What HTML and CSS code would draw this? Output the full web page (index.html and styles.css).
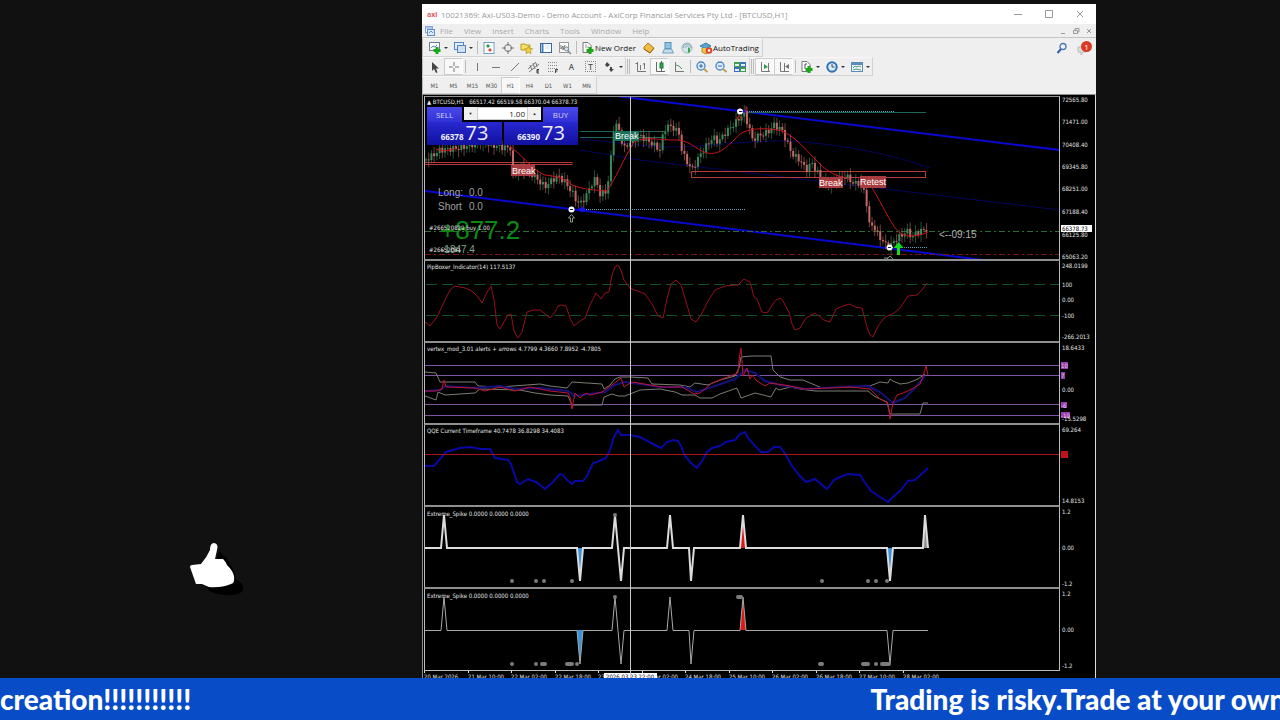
FILE: index.html
```html
<!DOCTYPE html>
<html lang="en">
<head>
    <meta charset="UTF-8">
    <meta name="viewport" content="width=device-width, initial-scale=1.0">
    <title>BTCUSD,H1 - Live Stream</title>
    <link rel="stylesheet" href="styles.css">
</head>
<body>
    <div class="stage">
        <aside class="sidebar">
            <svg class="thumb" width="56" height="56" viewBox="0 0 56 56">
                <path class="thumb-shadow" d="M30 10 L38 18 Q46 30 47 39 Q56 42 54 50 Q48 55 38 54 Q22 54 18 47 Z"/>
                <path class="thumb-hand" d="M1 26 Q1 24 3 24 L12 23 Q18 16 21 9 Q21 2 25 2 Q30 3 28 9 L26 18 L34 18 Q37 21 38 24 Q44 30 45 35 Q46 42 42 43 Q32 47 20 46 L13 43 L7 43 Z"/>
            </svg>
        </aside>

        <main class="terminal">
            <header class="titlebar">
                <span class="logo">axi</span>
                <h1>10021369: Axi-US03-Demo - Demo Account - AxiCorp Financial Services Pty Ltd - [BTCUSD,H1]</h1>
                <div class="window-btns">
                    <button aria-label="Minimize"><svg width="10" height="10"><path d="M1 5.500h8"/></svg></button>
                    <button aria-label="Maximize"><svg width="10" height="10"><path d="M1.500 1.500h7v7h-7z"/></svg></button>
                    <button aria-label="Close"><svg width="10" height="10"><path d="M2 2l6 6M8 2l-6 6"/></svg></button>
                </div>
            </header>

            <nav class="menubar">
                <svg class="menu-icon" width="12" height="12"><rect x="1.500" y="1.500" width="7" height="6" fill="#fff" stroke="#7fa8d8"/><rect x="3.500" y="4.500" width="7" height="6" fill="#dbe9f8" stroke="#5f8fc8"/><path d="M2 3h6M5 8l2-2 2 2" stroke="#5f8fc8" fill="none"/></svg>
                <a href="#">File</a>
                <a href="#">View</a>
                <a href="#">Insert</a>
                <a href="#">Charts</a>
                <a href="#">Tools</a>
                <a href="#">Window</a>
                <a href="#">Help</a>
                <div class="child-btns">
                    <button aria-label="Minimize chart"><svg width="8" height="8"><path d="M2 6.500h4"/></svg></button>
                    <button aria-label="Restore chart"><svg width="8" height="8"><path d="M1.500 3.500h4v3h-4zM3 3V1.500h4V5H6"/></svg></button>
                    <button aria-label="Close chart"><svg width="8" height="8"><path d="M2 2l4 4M6 2l-4 4"/></svg></button>
                </div>
            </nav>

            <div class="toolbar">
                <div class="tools">
                    <button class="tool drop" aria-label="New chart"><svg width="14" height="14"><rect x="1.500" y="1.500" width="10" height="8" fill="#fff" stroke="#6b7f93"/><path d="M3 7l2-2 2 1 2-2" stroke="#4a90c0" fill="none"/><path d="M9 6v7M5.500 9.500h7" stroke="#18a818" stroke-width="3"/></svg></button>
                    <button class="tool drop" aria-label="Profiles"><svg width="14" height="14"><rect x="1.500" y="1.500" width="9" height="7" fill="#e3eefa" stroke="#5585ba"/><rect x="4.500" y="4.500" width="8" height="7" fill="#cfe0f2" stroke="#5585ba"/></svg></button>
                    <i class="sep"></i>
                    <button class="tool" aria-label="Market watch"><svg width="14" height="14"><rect x="2" y="1.500" width="10" height="11" fill="#fff" stroke="#6f9fc4"/><path d="M4 5l2-2 2 2-2 2z" fill="#23a047"/><path d="M6 9l2-2 2 2-2 2z" fill="#d9512f"/></svg></button>
                    <button class="tool" aria-label="Data window"><svg width="14" height="14"><circle cx="7" cy="7" r="3.500" fill="none" stroke="#777"/><path d="M7 1v4M7 9v4M1 7h4M9 7h4" stroke="#777"/></svg></button>
                    <button class="tool" aria-label="Navigator"><svg width="14" height="14"><path d="M1 3h4l1 1h4v5H1z" fill="#f6e06a" stroke="#b79d22"/><path d="M8.500 5l1.200 2.500 2.800.3-2 2 .5 2.800-2.500-1.300L6 12.600l.5-2.800-2-2 2.800-.3z" fill="#f3d23c" stroke="#b08d18" stroke-width=".7"/></svg></button>
                    <button class="tool" aria-label="Terminal"><svg width="14" height="14"><rect x="1.500" y="2.500" width="11" height="9" fill="#fff" stroke="#34679c"/><path d="M3.500 3v8" stroke="#4a7fc0" stroke-width="2"/><path d="M6 5h5M6 7h5" stroke="#cde"/></svg></button>
                    <button class="tool" aria-label="Strategy tester"><svg width="14" height="14"><rect x="1.500" y="1.500" width="9" height="10" fill="#fff" stroke="#999"/><path d="M3 4v4l2-3v4l2-5" stroke="#777" fill="none"/><circle cx="8.500" cy="8" r="2" fill="#dceaf0" stroke="#6a8a9a"/><path d="M10 10l3 3" stroke="#888" stroke-width="1.500"/></svg></button>
                    <i class="sep"></i>
                    <button class="tool text-tool order"><svg width="14" height="14"><path d="M2 1.500h5l3 3v7H2z" fill="#fff" stroke="#777"/><path d="M4 4h2M4 6h4" stroke="#999"/><path d="M9 6v7M5.500 9.500h7" stroke="#18a818" stroke-width="3"/></svg>New Order</button>
                    <button class="tool" aria-label="MetaEditor"><svg width="14" height="14"><path d="M2 6l4-4 6 5-4 5-6-4z" fill="#eebd45" stroke="#b5791a"/><path d="M2 8l6 4 4-5" fill="none" stroke="#9c640e"/></svg></button>
                    <button class="tool" aria-label="Community"><svg width="14" height="14"><rect x="4" y="1.500" width="6" height="6" fill="#8fc4e6" stroke="#5a90b8"/><path d="M1.500 12l2-4h7l2 4z" fill="#c5dff0" stroke="#6f9fbe"/></svg></button>
                    <button class="tool" aria-label="Signals"><svg width="14" height="14"><circle cx="7" cy="7" r="5" fill="#d6e6e8" stroke="#9bb5bb"/><path d="M3 7a4 4 0 018 0M5 7a2 2 0 014 0" fill="none" stroke="#8cb0bc"/><path d="M8 7v5l2-1V7z" fill="#3aa853"/></svg></button>
                    <button class="tool text-tool auto"><svg width="14" height="14"><path d="M1 5l6-3 5 3-5 3z" fill="#5ba4cf" stroke="#3c7ca4"/><path d="M3 7v4l4 2 3-2V7" fill="#efc64c" stroke="#b68f20"/><circle cx="10" cy="9.500" r="3.300" fill="#dc4428"/><path d="M8.800 8.300h2.400v2.400H8.800z" fill="#fff"/></svg>AutoTrading</button>
                </div>
                <div class="alerts">
                    <button aria-label="Search"><svg width="12" height="12"><circle cx="7" cy="4.500" r="3" fill="#eef4fc" stroke="#4872b0" stroke-width="1.300"/><path d="M5 7l-3.500 4" stroke="#3560a8" stroke-width="2"/></svg></button>
                    <button class="bubble" aria-label="Messages"><svg width="16" height="16"><path d="M2 7h8v5H7l-2 3v-3H2z" fill="#ddd" stroke="#bbb"/></svg><span class="badge">1</span></button>
                </div>
            </div>

            <div class="toolbar">
                <div class="tools">
                    <button class="tool" aria-label="Cursor"><svg width="14" height="14"><path d="M4 2v9l2-2 2 4 1.500-.7L8 8.500h3z" fill="#444"/></svg></button>
                    <button class="tool on" aria-label="Crosshair"><svg width="14" height="14"><path d="M7 2v4M7 8v4M2 7h4M8 7h4" stroke="#777"/></svg></button>
                    <i class="sep"></i>
                    <button class="tool" aria-label="Vertical line"><svg width="14" height="14"><path d="M7.500 3v8" stroke="#777"/></svg></button>
                    <button class="tool" aria-label="Horizontal line"><svg width="14" height="14"><path d="M3 7.500h8" stroke="#777"/></svg></button>
                    <button class="tool" aria-label="Trendline"><svg width="14" height="14"><path d="M3 11l8-8" stroke="#777"/></svg></button>
                    <button class="tool" aria-label="Equidistant channel"><svg width="14" height="14"><path d="M1 9l8-7M2 12l10-8M3 5l2 5M6 3l2 6M9 3l1 4" stroke="#777"/><path d="M12 9.500h-2v3.500h2M10 11h2" stroke="#333" fill="none"/></svg></button>
                    <button class="tool" aria-label="Fibonacci"><svg width="14" height="14"><path d="M2 2.500h10M2 5.500h10M2 8.500h10M2 11.500h6" stroke="#888" stroke-dasharray="1 1"/><path d="M9.500 13V9.500H12M9.500 11h2" stroke="#444" fill="none"/></svg></button>
                    <button class="tool glyph" aria-label="Text">A</button>
                    <button class="tool glyph boxed" aria-label="Text label"><span>T</span></button>
                    <button class="tool drop" aria-label="Arrows"><svg width="14" height="14"><path d="M4 2l3 3-3 2-2-2zM8 12l-2-3h1V7h2v2h2z" fill="#444"/></svg></button>
                </div>
                <div class="tools">
                    <i class="grip"></i>
                    <button class="tool" aria-label="Bar chart"><svg width="14" height="14"><path d="M3.500 2v9.500H12M6.500 5v5M10.500 3v6M1.500 3.500h2" stroke="#777" fill="none"/><path d="M9 4h1.500" stroke="#2a9d48"/></svg></button>
                    <button class="tool on" aria-label="Candlesticks"><svg width="14" height="14"><path d="M3.500 2v9.500H12M8.500 1v10" stroke="#666" fill="none"/><rect x="7" y="3" width="3" height="5" fill="#2aa74a" stroke="#1c7a34"/></svg></button>
                    <button class="tool" aria-label="Line chart"><svg width="14" height="14"><path d="M3.500 2v9.500H12" stroke="#777" fill="none"/><path d="M4 5q3 0 6 4" stroke="#4c9c68" fill="none"/></svg></button>
                    <i class="sep"></i>
                    <button class="tool" aria-label="Zoom in"><svg width="14" height="14"><circle cx="6" cy="6" r="4" fill="#dcecfa" stroke="#4a86c4" stroke-width="1.300"/><path d="M4 6h4M6 4v4" stroke="#2c6aa8"/><path d="M9 9l3.500 3" stroke="#c0a050" stroke-width="2"/></svg></button>
                    <button class="tool" aria-label="Zoom out"><svg width="14" height="14"><circle cx="6" cy="6" r="4" fill="#dcecfa" stroke="#4a86c4" stroke-width="1.300"/><path d="M4 6h4" stroke="#2c6aa8"/><path d="M9 9l3.500 3" stroke="#c0a050" stroke-width="2"/></svg></button>
                    <button class="tool" aria-label="Tile windows"><svg width="14" height="14"><path d="M1 2h6v5H1z" fill="#3f9c4a"/><path d="M7 2h6v5H7z" fill="#3c6fc0"/><path d="M1 7h6v5H1z" fill="#3c6fc0"/><path d="M7 7h6v5H7z" fill="#3f9c4a"/><path d="M2 4h4v2H2zM8 4h4v2H8zM2 9h4v2H2zM8 9h4v2H8z" fill="#e6f1ee"/></svg></button>
                </div>
                <div class="tools">
                    <i class="grip"></i>
                    <button class="tool on" aria-label="Auto scroll"><svg width="14" height="14"><path d="M3.500 2v9.500H12M10.500 3v8" stroke="#777" fill="none"/><path d="M6 4l4 3-4 2z" fill="#2a9d48"/></svg></button>
                    <button class="tool on" aria-label="Chart shift"><svg width="14" height="14"><path d="M3.500 2v9.500H12M7.500 3v8" stroke="#777" fill="none"/><path d="M12 4L8 6.500 12 9z" fill="#777"/></svg></button>
                    <i class="sep"></i>
                    <button class="tool drop" aria-label="Indicators"><svg width="14" height="14"><path d="M2 1.500h5l3 3v7H2z" fill="#fff" stroke="#777"/><path d="M5 9V4h2" stroke="#555" fill="none"/><path d="M9 6v7M5.500 9.500h7" stroke="#18a818" stroke-width="3"/></svg></button>
                    <button class="tool drop" aria-label="Periods"><svg width="14" height="14"><circle cx="7" cy="7" r="4.700" fill="#d7e8f8" stroke="#2f6fb4" stroke-width="2"/><path d="M7 4v3h2.500" stroke="#35526e" fill="none"/></svg></button>
                    <button class="tool drop" aria-label="Templates"><svg width="14" height="14"><rect x="1.500" y="2.500" width="11" height="9" fill="#eef5fb" stroke="#5c8db8"/><path d="M2 4h10" stroke="#5c8db8" stroke-width="2"/><path d="M3 8l2-2 2 1 2-1 2 1M3 10l3-1 5 1" stroke="#5a9a78" fill="none"/></svg></button>
                </div>
            </div>

            <div class="toolbar periods">
                <div class="tools">
                    <button class="tool">M1</button>
                    <button class="tool">M5</button>
                    <button class="tool">M15</button>
                    <button class="tool">M30</button>
                    <button class="tool on">H1</button>
                    <button class="tool">H4</button>
                    <button class="tool">D1</button>
                    <button class="tool">W1</button>
                    <button class="tool">MN</button>
                </div>
            </div>

            <section class="workspace">
                <div class="panel price">
                    <svg class="plot">
                        <g transform="translate(-425 -97)">
                            <g class="faint-blue">
                                <path d="M580 139L650 146C690 150 740 140 790 141C830 144 880 150 930 168"/>
                                <path d="M580 150L640 160L860 186L1060 210"/>
                            </g>
                            <g class="trend">
                                <path d="M620 96.500L1060 150"/>
                                <path d="M425 191L983 260"/>
                            </g>
                            <path class="dash-green" d="M425 231.500H2000"/>
                            <path class="dash-red" d="M425 254.500H2000"/>
                            <path class="teal" d="M580 131.500H665M580 137.500H665M745 112.500H926"/>
                            <path class="dotted" d="M745 111.500H895M580 209.500H746M890 247.500H928"/>
                            <rect class="zone" x="420" y="162.500" width="152" height="2"/>
                            <rect class="zone" x="691.500" y="171.500" width="234" height="6"/>
                            <g id="candles"></g>
                            <path class="average" d="M436 149Q446 153 456 148M511 147C525 158 535 172 545 175C555 176 565 178 572 185C585 190 595 190 607 191C616 178 622 162 634 142C642 137 655 139 670 140C690 138 695 150 707 153C720 156 730 144 740 134C750 127 770 128 782 131C800 138 815 163 830 172C838 177 843 176 850 180M868 182C880 198 890 225 900 233C908 238 920 236 928 232"/>
                            <g class="marker"><circle cx="571.500" cy="209.500" r="3"/><circle cx="740" cy="111.500" r="3"/><circle cx="889.500" cy="247.500" r="3"/></g>
                            <path class="marker-line" d="M570 209.500h3M739 111.500h3M888 247.500h3"/>
                            <path class="marker-blue" d="M578 209.500l4-3 4 3-4 3zM742 111.500l4-2v4z"/>
                            <path class="hollow-arrow" d="M571.500 214.500l-3 3.500h2v4h2v-4h2zM887 259l3-3 3 3M884 258h4"/>
                            <path class="sell-arrow" d="M746 106v7M737 119q2-6 5 0M830 181h10v2z"/>
                            <path class="buy-arrow" d="M898.500 242l-5 6h3.500v7h3v-7h3.500z"/>
                            <g class="tag red"><rect x="511" y="165" width="24" height="11"/><text x="512" y="174">Break</text></g>
                            <g class="tag green"><rect x="615" y="131" width="24" height="10"/><text x="615" y="139">Break</text></g>
                            <g class="tag red"><rect x="819" y="177" width="24" height="11"/><text x="819" y="186">Break</text></g>
                            <g class="tag red"><rect x="860" y="176" width="26" height="12"/><text x="860" y="185">Retest</text></g>
                            <text class="countdown" x="939" y="238">&lt;--09:15</text>
                            <g class="lots">
                                <text x="438" y="196">Long:</text><text x="469" y="196">0.0</text>
                                <text x="438" y="210">Short</text><text x="469" y="210">0.0</text>
                            </g>
                            <text class="profit" x="440" y="239">+877.2</text>
                            <text class="pips" x="441" y="253">-1847.4</text>
                            <text class="label" x="429" y="230">#266520829 buy 1.00</text>
                            <text class="label" x="429" y="252">#26652081</text>
                            <text class="label" x="427" y="104">▲  BTCUSD,H1&#160;&#160; 66517.42 66519.58 66370.04 66378.73</text>
                        </g>
                    </svg>
                    <svg class="scale">
                        <g class="label">
                            <text x="2" y="6">72565.80</text>
                            <text x="2" y="28">71471.00</text>
                            <text x="2" y="51">70408.40</text>
                            <text x="2" y="73">69345.80</text>
                            <text x="2" y="95">68251.00</text>
                            <text x="2" y="118">67188.40</text>
                            <text x="2" y="141">66125.80</text>
                            <text x="2" y="163">65063.20</text>
                        </g>
                        <rect class="current-bg" x="1" y="129" width="31" height="7"/>
                        <text class="current" x="2" y="135">66378.73</text>
                    </svg>

                    <form class="one-click">
                        <button type="button" class="side">SELL</button>
                        <div class="volume">
                            <button type="button" aria-label="Decrease volume">▼</button>
                            <input type="text" value="1.00" aria-label="Volume">
                            <button type="button" aria-label="Increase volume">▲</button>
                        </div>
                        <button type="button" class="side">BUY</button>
                        <button type="button" class="quote"><small>66378</small>73</button>
                        <button type="button" class="quote"><small>66390</small>73</button>
                    </form>
                </div>

                <div class="panel">
                    <svg class="plot">
                        <g transform="translate(-425 -261)">
                            <path class="level-green" d="M426 284.500H2000M426 315.500H2000"/>
                            <polyline class="pip" points="425,322 430,326 437,317 446,298 450,290 455,286 465,288 472,291 478,297 482,303 486,294 491,286 494,300 497,325 500,329 505,320 508,315 511,314 514,331 518,338 522,332 527,312 533,310 540,310 550,318 555,312 558,306 561,305 566,306 570,318 574,326 580,321 585,318 590,305 596,293 601,299 605,293 609,292 612,275 615,267 618,265 621,270 624,280 630,288 645,294 652,304 658,316 663,318 667,299 671,284 676,280 681,285 687,305 691,319 696,322 701,315 707,303 715,290 725,286 738,285 744,279 750,282 754,297 757,299 762,312 767,313 773,304 776,300 781,298 784,303 789,312 792,324 795,330 800,328 806,318 815,313 824,320 830,322 836,309 843,306 850,304 855,307 862,308 867,327 870,335 873,337 878,326 885,317 894,313 900,308 908,296 917,295 922,290 927,283"/>
                            <text class="label" x="427" y="269">PipBoxer_Indicator(14) 117.5137</text>
                        </g>
                    </svg>
                    <svg class="scale">
                        <g class="label">
                            <text x="2" y="7">248.0199</text>
                            <text x="2" y="26">100</text>
                            <text x="2" y="41">0.00</text>
                            <text x="2" y="57">-100</text>
                            <text x="2" y="78">-266.2013</text>
                        </g>
                    </svg>
                </div>

                <div class="panel">
                    <svg class="plot">
                        <g transform="translate(-425 -343)">
                            <path class="level-purple" d="M425 365.500H2000M425 375.500H2000M425 404.500H2000M425 415.500H2000"/>
                            <polyline class="band" points="425,372 436,373 440,382 475,382 478,386 500,387 540,384 550,386 567,388 572,382 602,384 604,389 610,385 615,379 620,377 630,377 648,378 652,384 680,385 690,387 695,383 708,385 720,380 735,376 739,368 741,357 751,356 771,356 773,370 777,374 780,377 790,380 803,380 822,388 850,387 870,386 880,382 888,383 890,379 893,381 900,384 908,383 918,379 925,374"/>
                            <polyline class="band" points="425,396 436,400 438,392 445,395 475,393 480,389 520,390 535,393 550,395 568,396 572,405 602,405 604,397 612,394 618,396 625,396 640,390 660,389 675,392 682,395 695,395 700,398 712,398 720,394 737,388 741,398 755,393 771,397 776,388 779,390 790,387 800,389 815,391 850,391 868,391 874,396 878,398 887,402 890,414 920,414 923,403 928,403"/>
                            <polyline class="slow" points="425,391 440,390 446,386 475,388 500,386 515,389 540,388 568,391 574,396 590,394 605,392 615,385 625,382 640,384 660,387 685,387 697,392 715,386 735,379 745,370 755,373 765,381 780,385 805,389 840,387 868,386 880,392 893,403 905,398 915,388 925,376"/>
                            <polyline class="fast" points="425,391 436,391 442,389 444,380 446,387 475,388 485,391 500,387 515,391 530,387 550,391 568,393 570,397 572,409 575,393 580,398 586,393 590,395 602,392 612,385 621,378 624,387 632,382 650,385 662,387 682,387 694,394 700,393 712,383 725,378 738,373 739,360 741,348 743,376 747,368 750,379 752,375 757,381 765,386 770,383 790,386 805,389 830,388 850,387 870,389 880,399 888,403 890,419 893,403 897,395 903,393 912,389 920,384 923,376 926,366 928,375"/>
                            <text class="label" x="427" y="351">vertex_mod_3.01 alerts + arrows 4.7799 4.3660 7.8952 -4.7805</text>
                        </g>
                    </svg>
                    <svg class="scale">
                        <path class="purple-mark" d="M1 19h7v7H1zM1 29h4v7H1zM1 59h6v6H1zM1 69h9v6H1z"/>
                        <g class="label">
                            <text x="2" y="7">18.6433</text>
                            <text x="2" y="49">0.00</text>
                            <text x="2" y="78">-15.5298</text>
                        </g>
                        <g class="mark-text">
                            <text x="1" y="25">10</text>
                            <text x="1" y="35">7</text>
                            <text x="1" y="65">-6</text>
                            <text x="1" y="75">-10</text>
                        </g>
                    </svg>
                </div>

                <div class="panel">
                    <svg class="plot">
                        <g transform="translate(-425 -425)">
                            <polyline class="qqe" points="425,466 434,466 440,459 446,452 460,448 470,447 480,449 490,449 495,458 508,460 511,464 517,482 520,484 528,479 536,482 545,489 552,483 560,474 563,475 567,480 572,484 575,481 583,481 587,476 593,463 597,462 606,458 610,450 614,437 618,430 621,435 630,435 640,437 655,445 661,448 667,442 673,440 678,441 681,446 685,456 691,463 697,468 702,461 707,452 712,448 720,446 726,442 735,440 740,434 745,432 748,438 755,446 761,452 768,452 774,447 780,447 784,452 792,466 800,476 806,482 815,479 822,485 827,489 834,480 840,477 848,474 860,475 866,484 871,491 880,497 888,502 895,495 900,491 908,481 915,480 928,468"/>
                            <path class="level-red" d="M425 454.500H2000"/>
                            <text class="label" x="427" y="433">QQE Current Timeframe 40.7478 36.8298 34.4083</text>
                        </g>
                    </svg>
                    <svg class="scale">
                        <rect class="red-mark" x="1" y="26" width="7" height="7"/>
                        <g class="label">
                            <text x="2" y="7">69.264</text>
                            <text x="2" y="78">14.8153</text>
                        </g>
                    </svg>
                </div>

                <div class="panel">
                    <svg class="plot">
                        <g transform="translate(-425 -507)">
                            <path class="fill-blue" d="M577 548h6l-3 33zM887 548h6l-3 33z"/>
                            <path class="fill-red" d="M740 548l3-33 3 33z"/>
                            <path class="fill-gray" d="M922 548l3-33 3 33z"/>
                            <polyline class="spike bold" points="425,548 441,548 444,515 447,548 577,548 580,581 583,548 612,548 615,515 618,548 621,581 624,548 667,548 670,515 673,548 689,548 691,581 694,548 740,548 743,515 746,548 887,548 890,581 893,548 923,548 925,515 928,548"/>
                            <path class="dots" d="M512 581h0M536 581h0M544 581h0M572 581h0M615 515h0M822 581h0M868 581h0M876 581h0M887 581h0"/>
                            <text class="label" x="427" y="516">Extreme_Spike 0.0000 0.0000 0.0000</text>
                        </g>
                    </svg>
                    <svg class="scale">
                        <g class="label">
                            <text x="2" y="7">1.2</text>
                            <text x="2" y="43">0.00</text>
                            <text x="2" y="79">-1.2</text>
                        </g>
                    </svg>
                </div>

                <div class="panel last">
                    <svg class="plot">
                        <g transform="translate(-425 -589)">
                            <path class="fill-blue" d="M577 630h6l-3 34z"/>
                            <path class="fill-red" d="M740 630l3-33 3 33z"/>
                            <polyline class="spike" points="425,630.500 441,630.500 444,597 447,630.500 577,630.500 580,664 583,630.500 612,630.500 615,597 618,630.500 621,664 624,630.500 667,630.500 670,597 673,630.500 689,630.500 691,664 694,630.500 740,630.500 743,597 746,630.500 887,630.500 890,664 893,630.500 928,630.500"/>
                            <path class="dots" d="M512 664h0M536 664h0M542 664h3M567 664h5M577 664h0M615 597h0M738 597h3M820 664h2M863 664h5M876 664h0M882 664h7"/>
                            <text class="label" x="427" y="598">Extreme_Spike 0.0000 0.0000 0.0000</text>
                        </g>
                    </svg>
                    <svg class="scale">
                        <g class="label">
                            <text x="2" y="7">1.2</text>
                            <text x="2" y="43">0.00</text>
                            <text x="2" y="79">-1.2</text>
                        </g>
                    </svg>
                </div>

                <svg class="dates">
                    <g class="label" id="dates"></g>
                    <rect class="current-bg" x="180" y="2" width="53" height="9"/>
                    <text class="current" x="182" y="8">2026.03.23 22:00</text>
                </svg>
                <div class="crosshair"></div>
            </section>
        </main>
    </div>

    <footer class="ticker">
        <span class="ticker-old">creation!!!!!!!!!!!</span>
        <span>Trading is risky.Trade at your own</span>
    </footer>

    <script src="script.js"></script>
</body>
</html>
```

FILE: script.js
```javascript
const SVG_NS = 'http://www.w3.org/2000/svg';
const BAR_STEP = 2.72;

// Turning points of the hourly close, x / y in chart units
const closes = [
    [425, 160], [432, 156], [440, 150], [460, 148], [480, 142], [500, 147], [511, 148],
    [513, 175], [520, 168], [530, 172], [536, 178], [545, 187], [552, 180], [558, 176],
    [565, 182], [572, 192], [577, 202], [581, 203], [586, 196], [591, 185], [596, 178],
    [600, 195], [607, 190], [610, 170], [613, 130], [617, 125], [621, 135], [623, 150],
    [630, 142], [640, 136], [650, 142], [660, 150], [664, 130], [668, 126], [674, 128],
    [680, 135], [682, 152], [686, 160], [692, 170], [700, 155], [707, 145], [713, 137],
    [718, 142], [726, 132], [736, 122], [744, 113], [750, 130], [752, 140], [758, 136],
    [768, 132], [774, 125], [782, 130], [788, 145], [793, 155], [800, 160], [806, 170],
    [812, 163], [817, 172], [824, 182], [830, 185], [836, 180], [846, 176], [854, 184],
    [862, 182], [867, 205], [869, 225], [873, 225], [878, 235], [886, 245], [890, 246],
    [897, 238], [903, 235], [906, 230], [912, 237], [918, 232], [930, 228]
];

function closeAt(x) {
    for (let i = 1; i < closes.length; i++) {
        const [x0, y0] = closes[i - 1];
        const [x1, y1] = closes[i];
        if (x <= x1) {
            return y0 + (y1 - y0) * (x - x0) / (x1 - x0);
        }
    }
    return closes[closes.length - 1][1];
}

function addShape(parent, name, attrs) {
    const el = document.createElementNS(SVG_NS, name);
    Object.keys(attrs).forEach(key => el.setAttribute(key, attrs[key]));
    parent.appendChild(el);
    return el;
}

function drawCandles() {
    const group = document.getElementById('candles');
    let open = closeAt(425);
    for (let i = 0; i < 185; i++) {
        const x = 426 + i * BAR_STEP;
        const close = closeAt(x) + Math.sin(i * 2.3) * 3;
        const top = Math.min(open, close);
        const height = Math.max(1, Math.abs(open - close));
        const wick = 2 + Math.abs(Math.sin(i * 1.7)) * 5;
        const side = close < open ? 'up' : 'down';
        addShape(group, 'path', { class: 'wick ' + side, d: `M${x} ${top - wick}V${top + height + wick}` });
        addShape(group, 'rect', { class: 'candle ' + side, x: x - 1, y: top, width: 2, height: height });
        open = close;
    }
}

function drawDates() {
    const labels = ['20 Mar 2026', '21 Mar 10:00', '22 Mar 02:00', '22 Mar 18:00', '23 Mar 10:00',
        '24 Mar 02:00', '24 Mar 18:00', '25 Mar 10:00', '26 Mar 02:00', '26 Mar 18:00',
        '27 Mar 10:00', '28 Mar 02:00'];
    const group = document.getElementById('dates');
    labels.forEach((label, i) => {
        const x = Math.round(i * 16 * BAR_STEP);
        addShape(group, 'rect', { x: x, y: 0, width: 1, height: 2 });
        addShape(group, 'text', { x: x, y: 8 }).textContent = label;
    });
}

drawCandles();
drawDates();
```

FILE: styles.css
```css
* {
    box-sizing: border-box;
}
body {
    margin: 0;
    height: 100vh;
    display: flex;
    flex-direction: column;
    overflow: hidden;
    background-color: #111;
    font-family: "Open Sans", "Noto Sans", sans-serif;
}
button {
    border: none;
    background: none;
    padding: 0;
    font: inherit;
    color: inherit;
}
svg {
    display: block;
}

/* Stage */
.stage {
    flex: 1;
    min-height: 0;
    display: grid;
    grid-template-columns: 422fr 674fr 184fr;
}
.sidebar {
    display: flex;
    align-items: flex-end;
    justify-content: center;
    padding: 0 0 81px 11px;
}
.thumb-shadow {
    fill: #000;
}
.thumb-hand {
    fill: #fff;
}
.terminal {
    margin-top: 4px;
    display: flex;
    flex-direction: column;
    min-width: 0;
    overflow: hidden;
    background-color: #efefef;
}

/* Title and menu */
.titlebar {
    display: flex;
    align-items: center;
    height: 20px;
    padding-left: 5px;
    background-color: #fff;
    color: #999;
}
.titlebar h1 {
    flex: 1;
    margin: 0;
    font-size: 8px;
    font-weight: 400;
    white-space: nowrap;
}
.logo {
    width: 14px;
    color: #e05a60;
    font-size: 7px;
    font-weight: 700;
}
.window-btns {
    display: flex;
    gap: 21px;
    padding-right: 11px;
}
.window-btns svg, .child-btns svg {
    fill: none;
    stroke: #999;
}
.menubar {
    display: flex;
    align-items: center;
    gap: 11px;
    height: 14px;
    padding-left: 2px;
    border-bottom: 1px solid #c4c4c4;
    font-size: 8px;
}
.menubar a {
    color: #aaa;
    text-decoration: none;
}
.menu-icon {
    margin-right: -7px;
}
.child-btns {
    display: flex;
    gap: 5px;
    margin-left: auto;
    padding-right: 3px;
}

/* Toolbars */
.toolbar {
    display: flex;
    height: 19px;
}
.tools {
    display: flex;
    align-items: center;
    padding-left: 2px;
    border: 1px solid #d2d2d2;
    border-left-color: #bbb;
    border-top-color: #f8f8f8;
}
.tools + .tools {
    padding-left: 0;
    border-left: none;
}
.tool {
    display: flex;
    align-items: center;
    justify-content: center;
    width: 19px;
    height: 17px;
}
.tool.on {
    background-color: #f8f8f8;
    border: 1px solid #ccc;
    border-right-color: #fff;
}
.tool.drop {
    width: 25px;
    justify-content: flex-start;
    padding-left: 3px;
}
.tool.drop::after {
    content: "";
    margin-left: 2px;
    border: 2px solid transparent;
    border-top-color: #333;
    border-bottom: none;
}
.text-tool {
    font-size: 8px;
    color: #111;
    white-space: nowrap;
}
.order {
    width: 61px;
}
.auto {
    width: 66px;
}
.glyph {
    font-size: 8px;
    font-weight: 600;
    color: #555;
}
.boxed span {
    border: 1px dotted #888;
    padding: 0 2px;
    line-height: 9px;
}
.sep {
    width: 1px;
    height: 13px;
    margin: 0 1px 0 2px;
    background-color: #bbb;
}
.grip {
    width: 3px;
    height: 15px;
    margin: 0 1px;
    border-left: 1px solid #bbb;
    border-right: 1px solid #bbb;
}
.alerts {
    display: flex;
    align-items: center;
    gap: 8px;
    margin-left: auto;
    padding-right: 4px;
}
.bubble {
    position: relative;
}
.badge {
    position: absolute;
    top: 1px;
    right: 0;
    width: 11px;
    height: 11px;
    border-radius: 50%;
    background-color: #d83a24;
    color: #fff;
    font-size: 8px;
    line-height: 11px;
}
.periods {
    height: 18px;
    color: #555;
    font-family: "DejaVu Sans Condensed", "DejaVu Sans", sans-serif;
    font-size: 6px;
}

/* Chart workspace */
.workspace {
    position: relative;
    flex: 1;
    padding: 1px 0 0 1px;
    overflow: hidden;
    background-color: #000;
    border: 1px solid #8c8c8c;
    border-right-color: #ddd;
    border-bottom: none;
}
.panel {
    position: relative;
    display: grid;
    grid-template-columns: 1fr 35px;
}
.plot {
    width: 100%;
    height: 82px;
    border: 1px solid #bbb;
    border-top: none;
    border-bottom: 2px solid #8f8f8f;
}
.scale {
    width: 35px;
    height: 82px;
}
.price .plot, .price .scale {
    height: 165px;
}
.price .plot {
    border-top: 1px solid #8f8f8f;
}
.last .plot {
    border-bottom: 1px solid #bbb;
}
.dates {
    width: 100%;
    height: 10px;
}
.label, .current, .mark-text {
    font-family: "DejaVu Sans Condensed", "DejaVu Sans", sans-serif;
    font-size: 6px;
    fill: #e4e4e4;
}
.current {
    fill: #000;
}
.current-bg {
    fill: #fff;
}
.crosshair {
    position: absolute;
    top: 2px;
    bottom: 0;
    left: 207px;
    width: 1px;
    background-color: #c8c8c8;
}

/* Price chart */
.plot path, .plot polyline {
    fill: none;
}
.trend {
    stroke: #0808d0;
    stroke-width: 2;
}
.faint-blue {
    stroke: #04045c;
}
.dash-green {
    stroke: #2f6b34;
    stroke-dasharray: 6 3 2 3;
}
.dash-red {
    stroke: #7a1418;
    stroke-dasharray: 6 3 2 3;
}
.teal {
    stroke: #1f6558;
}
.dotted {
    stroke: #5f9fb8;
    stroke-dasharray: 1 1;
}
.zone {
    fill: none;
    stroke: #b83a34;
}
.average {
    stroke: #c8141c;
}
.up {
    stroke: #3c8a5c;
    fill: #3c8a5c;
}
.down {
    stroke: #c06a66;
    fill: #c06a66;
}
.wick {
    stroke-opacity: .6;
}
.candle {
    stroke: none;
}
.marker {
    fill: #fff;
}
.marker-line {
    stroke: #223;
}
.plot .marker-blue {
    fill: #1414e8;
}
.hollow-arrow {
    stroke: #8a9a8a;
}
.plot .sell-arrow {
    stroke: #e01818;
}
.plot .buy-arrow {
    fill: #10dc20;
}
.tag, .countdown, .lots, .profit, .pips {
    font-family: "Liberation Sans", sans-serif;
}
.tag {
    font-size: 9px;
}
.tag text {
    fill: #fff;
}
.tag.red rect {
    fill: #a83c40;
}
.tag.green rect {
    fill: #17705a;
}
.countdown {
    font-size: 10px;
    fill: #b0b0b0;
}
.lots {
    font-size: 10px;
    fill: #a0a0a0;
}
.profit {
    font-size: 26px;
    fill: #0a8a12;
}
.pips {
    font-size: 10px;
    fill: #7fa890;
}

/* Indicators */
.level-green {
    stroke: #10502c;
    stroke-dasharray: 11 5;
}
.pip {
    stroke: #96101c;
}
.level-purple {
    stroke: #7c54a0;
}
.band {
    stroke: #7c7c74;
}
.slow {
    stroke: #14107c;
    stroke-width: 2;
}
.fast {
    stroke: #c01430;
}
.purple-mark {
    fill: #9a3cae;
}
.mark-text {
    fill: #e8c8f0;
}
.qqe {
    stroke: #0808a4;
    stroke-width: 2;
}
.level-red {
    stroke: #a81418;
}
.red-mark {
    fill: #c01018;
}
.spike {
    stroke: #a8a8a8;
}
.spike.bold {
    stroke: #dcdcdc;
    stroke-width: 2;
}
.plot .fill-blue {
    fill: #3a92dc;
}
.plot .fill-red {
    fill: #dc1818;
}
.plot .fill-gray {
    fill: #8c8c8c;
}
.dots {
    stroke: #7c7c7c;
    stroke-width: 4;
    stroke-linecap: round;
}

/* One click trading */
.one-click {
    position: absolute;
    top: 11px;
    left: 3px;
    display: grid;
    grid-template-columns: 35px 40px 2px 39px 35px;
    grid-template-rows: 15px 23px;
    margin: 0;
}
.side {
    background: linear-gradient(#4a4ae8, #3030d8);
    color: #d4d4f8;
    font-size: 8px;
}
.volume {
    grid-column: 2 / 5;
    display: flex;
    margin: 0 2px 2px;
    background-color: #fff;
}
.volume input {
    flex: 1;
    min-width: 0;
    border: 1px solid #ccc;
    padding: 0 2px;
    font-family: inherit;
    font-size: 8px;
    text-align: right;
    color: #222;
}
.volume button {
    width: 13px;
    background-color: #f0f0f0;
    color: #222;
    font-size: 4px;
}
.quote {
    grid-column: span 2;
    display: flex;
    align-items: baseline;
    justify-content: center;
    gap: 2px;
    background: linear-gradient(#2828d0, #1010a0);
    color: #f0f0ff;
    font-size: 20px;
    line-height: 22px;
}
.quote small {
    font-size: 8px;
    font-weight: 700;
}
.quote:last-child {
    grid-column: 4 / 6;
}

/* Ticker */
.ticker {
    display: flex;
    align-items: center;
    height: 42px;
    background-color: #084cc8;
    color: #fff;
    font-family: Lato, sans-serif;
    font-size: 28px;
    font-weight: 900;
    white-space: nowrap;
    overflow: hidden;
}
.ticker-old {
    flex: 0 0 68%;
}
```
